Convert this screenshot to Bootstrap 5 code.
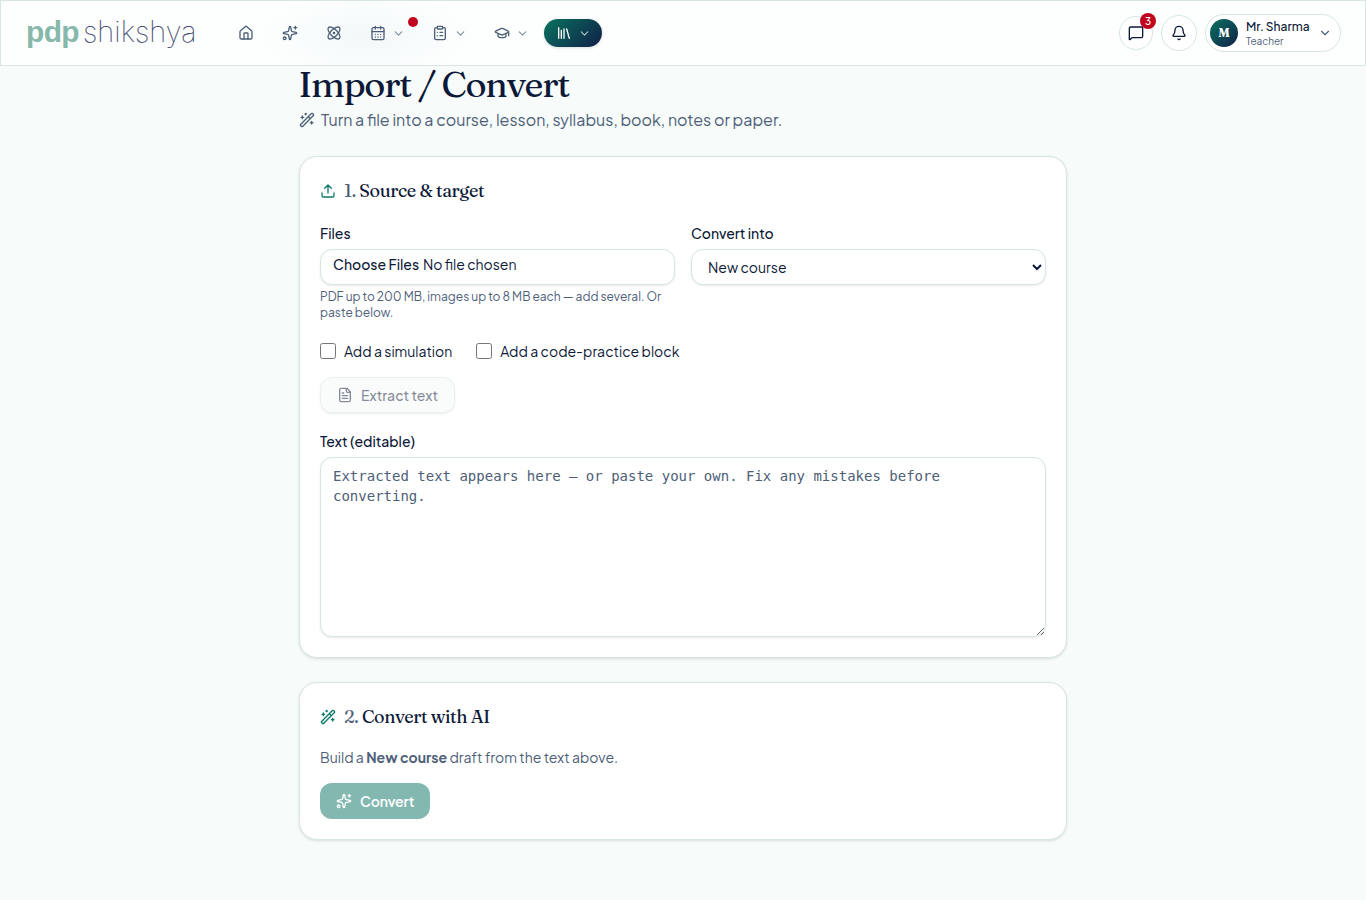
<!DOCTYPE html>
<html lang="en">
<head>
<meta charset="utf-8">
<meta name="viewport" content="width=device-width, initial-scale=1">
<title>Import / Convert</title>
<link rel="stylesheet" href="https://cdn.jsdelivr.net/npm/bootstrap@5.3.0/dist/css/bootstrap.min.css">
<style>
:root{--ink:#0c1838;--slate:#4d6078;--line:#d6e6e3;--teal:#0b7a6b;--red:#c0051f}
body{background:#f7fbfa;color:var(--ink);font-family:"Plus Jakarta Sans",Inter,sans-serif;font-size:14px;line-height:20px;height:900px;overflow:hidden;-webkit-font-smoothing:antialiased}
.ic{width:16px;height:16px;fill:none;stroke:currentColor;stroke-width:2;stroke-linecap:round;stroke-linejoin:round;flex:none;display:block}
.topbar{height:66px;border:1px solid #d9e6e4;padding:0 24px 0 25px;background:radial-gradient(ellipse 110px 45px at 365px 36px,#f3f8f9 0,#f3f8f900 100%),#fdfffe}
.brand-box{width:198px;margin-top:-3px}
.brand-a{font:bold 30px/32px "Liberation Sans",sans-serif;color:#87b8ab;letter-spacing:-.7px}
.brand-b{font:100 29px/32px Inter,sans-serif;color:#1e2858;letter-spacing:.1px;margin-left:4px;-webkit-text-stroke:.2px #4a5278}
.menu-item{color:var(--slate);height:28px;padding:0 13.5px 0 14px;gap:5.5px}
.menu-item.solo{padding:0 14px}
.menu-item .chev{width:13px;height:13px;opacity:.7}
.menu-item.on{background:linear-gradient(135deg,#08735f,#101f47);color:#fff;border-radius:14px;padding:0 12px;width:58px;margin-left:2px;box-shadow:0 1px 3px #0c183826}
.dot{width:10px;height:10px;background:var(--red);top:-2px;right:0}
.round-btn{color:var(--ink);border:1px solid var(--line);background:#fff}
.msg{width:34px;height:34px}
.bell{width:36px;height:36px}
.count{width:16px;height:16px;background:var(--red);font-size:10px;font-weight:500;line-height:16px;top:-4px;right:-4px}
.person{height:38px;width:136px;border:1px solid var(--line);padding:0 8px 0 4px;background:#fff}
.avatar{width:28px;height:28px;background:linear-gradient(135deg,#0b7362,#101f47);font:bold 12px/28px Fraunces,serif}
.p-name{font-size:12px;line-height:14px;font-weight:500;padding-top:1px}
.p-role{font-size:10px;line-height:14px;color:var(--slate)}
.chev-p{width:14px;height:14px;color:var(--slate)}
.page-col{width:768px}
h1,h2{font-family:Fraunces,"Liberation Serif",serif}
h1{font-size:36px;line-height:40px;margin:-2px 0 0 -.5px;font-weight:500;letter-spacing:-1.25px}
.lead-line{font-size:16px;line-height:24px;color:var(--slate);gap:6px;margin-top:4px}
.panel{background:#fff;border:1px solid var(--line);border-radius:18px;padding:20px;box-shadow:0 1px 3px #0c183821}
h2{font-size:18px;line-height:27px;font-weight:500;margin:0;letter-spacing:-.42px}
h2 .ic{color:var(--teal)}
h2 span{color:var(--slate)}
.fields{margin-top:19px}
.lbl{font-weight:500;line-height:20px;margin-bottom:6px;display:block}
.lbl-text{margin-top:18px}
.field{border:1px solid var(--line);border-radius:12px;background:#fff;box-shadow:0 1px 2px #0c183817;width:100%;height:36px;color:var(--ink)}
.file-f{padding:4px 12px}
.pick{margin-right:1.5px}
select.field{padding:0 0 0 12px}
.hint{font-size:12px;line-height:16px;color:var(--slate);margin-top:4px}
.opt input{width:16px;height:16px;margin:0}
.action{height:36px;border-radius:12px;border:1px solid var(--line);color:var(--ink);padding:0 16px;gap:8px;font-weight:500;width:max-content}
.action.ghost{opacity:.5;background:#f7fbfa;box-shadow:0 1px 2px #0c183826}
.action.solid{background:#82b8b0;border:0;color:#fff;font-weight:600;letter-spacing:-.1px}
textarea.field{height:180px;padding:8px 12px;font:14px/20px "DejaVu Sans Mono",monospace;display:block}
textarea::placeholder{color:var(--slate)}
.build{color:var(--slate);margin-top:17px}
</style>
</head>
<body>
<svg class="d-none">
<symbol id="house" viewBox="0 0 24 24"><path d="M15 21v-8a1 1 0 0 0-1-1h-4a1 1 0 0 0-1 1v8"/><path d="M3 10a2 2 0 0 1 .709-1.528l7-6a2 2 0 0 1 2.582 0l7 6A2 2 0 0 1 21 10v9a2 2 0 0 1-2 2H5a2 2 0 0 1-2-2z"/></symbol>
<symbol id="sparkles" viewBox="0 0 24 24"><path d="M11.017 2.814a1 1 0 0 1 1.966 0l1.051 5.558a2 2 0 0 0 1.594 1.594l5.558 1.051a1 1 0 0 1 0 1.966l-5.558 1.051a2 2 0 0 0-1.594 1.594l-1.051 5.558a1 1 0 0 1-1.966 0l-1.051-5.558a2 2 0 0 0-1.594-1.594l-5.558-1.051a1 1 0 0 1 0-1.966l5.558-1.051a2 2 0 0 0 1.594-1.594zM20 2v4M22 4h-4"/><circle cx="4" cy="20" r="2"/></symbol>
<symbol id="atom" viewBox="0 0 24 24"><circle cx="12" cy="12" r="1"/><path d="M20.2 20.2c2.04-2.03.02-7.36-4.5-11.9-4.54-4.52-9.87-6.54-11.9-4.5-2.04 2.03-.02 7.36 4.5 11.9 4.54 4.52 9.87 6.54 11.9 4.5Z"/><path d="M15.7 15.7c4.52-4.54 6.54-9.87 4.5-11.9-2.03-2.04-7.36-.02-11.9 4.5-4.52 4.54-6.54 9.87-4.5 11.9 2.03 2.04 7.36.02 11.9-4.5Z"/></symbol>
<symbol id="calendar" viewBox="0 0 24 24"><path d="M8 2v4M16 2v4M3 10h18M8 14h.01M12 14h.01M16 14h.01M8 18h.01M12 18h.01M16 18h.01"/><rect width="18" height="18" x="3" y="4" rx="2"/></symbol>
<symbol id="clipboard" viewBox="0 0 24 24"><rect width="8" height="4" x="8" y="2" rx="1"/><path d="M16 4h2a2 2 0 0 1 2 2v14a2 2 0 0 1-2 2H6a2 2 0 0 1-2-2V6a2 2 0 0 1 2-2h2M12 11h4M12 16h4M8 11h.01M8 16h.01"/></symbol>
<symbol id="cap" viewBox="0 0 24 24"><path d="M21.42 10.922a1 1 0 0 0-.019-1.838L12.83 5.18a2 2 0 0 0-1.66 0L2.6 9.08a1 1 0 0 0 0 1.832l8.57 3.908a2 2 0 0 0 1.66 0zM22 10v6M6 12.5V16a6 3 0 0 0 12 0v-3.5"/></symbol>
<symbol id="library" viewBox="0 0 24 24"><path d="m16 6 4 14M12 6v14M8 8v12M4 4v16"/></symbol>
<symbol id="chevron" viewBox="0 0 24 24"><path d="m6 9 6 6 6-6"/></symbol>
<symbol id="message" viewBox="0 0 24 24"><path d="M22 17a2 2 0 0 1-2 2H6.828a2 2 0 0 0-1.414.586l-2.202 2.202A.71.71 0 0 1 2 21.286V5a2 2 0 0 1 2-2h16a2 2 0 0 1 2 2z"/></symbol>
<symbol id="bell" viewBox="0 0 24 24"><path d="M10.268 21a2 2 0 0 0 3.464 0M3.262 15.326A1 1 0 0 0 4 17h16a1 1 0 0 0 .74-1.673C19.41 13.956 18 12.499 18 8A6 6 0 0 0 6 8c0 4.499-1.411 5.956-2.738 7.326"/></symbol>
<symbol id="wand" viewBox="0 0 24 24"><path d="m21.64 3.64-1.28-1.28a1.21 1.21 0 0 0-1.72 0L2.36 18.64a1.21 1.21 0 0 0 0 1.72l1.28 1.28a1.2 1.2 0 0 0 1.72 0L21.64 5.36a1.2 1.2 0 0 0 0-1.72M14 7l3 3M5 6v4M19 14v4M10 2v2M7 8H3M21 16h-4M11 3H9"/></symbol>
<symbol id="upload" viewBox="0 0 24 24"><path d="M12 3v12M17 8l-5-5-5 5M21 15v4a2 2 0 0 1-2 2H5a2 2 0 0 1-2-2v-4"/></symbol>
<symbol id="file" viewBox="0 0 24 24"><path d="M15 2H6a2 2 0 0 0-2 2v16a2 2 0 0 0 2 2h12a2 2 0 0 0 2-2V7ZM14 2v4a2 2 0 0 0 2 2h4M10 9H8M16 13H8M16 17H8"/></symbol>
</svg>
<header class="topbar d-flex align-items-center">
  <a class="d-flex align-items-center text-decoration-none brand-box" href="#"><span class="brand-a">pdp</span><span class="brand-b">shikshya</span></a>
  <nav class="d-flex align-items-center">
    <a class="menu-item solo d-flex align-items-center" href="#"><svg class="ic"><use href="#house"/></svg></a>
    <a class="menu-item solo d-flex align-items-center" href="#"><svg class="ic"><use href="#sparkles"/></svg></a>
    <a class="menu-item solo d-flex align-items-center" href="#"><svg class="ic"><use href="#atom"/></svg></a>
    <a class="menu-item d-flex align-items-center position-relative" href="#"><svg class="ic"><use href="#calendar"/></svg><svg class="ic chev"><use href="#chevron"/></svg><i class="dot rounded-circle position-absolute"></i></a>
    <a class="menu-item d-flex align-items-center" href="#"><svg class="ic"><use href="#clipboard"/></svg><svg class="ic chev"><use href="#chevron"/></svg></a>
    <a class="menu-item d-flex align-items-center" href="#"><svg class="ic"><use href="#cap"/></svg><svg class="ic chev"><use href="#chevron"/></svg></a>
    <a class="menu-item on d-flex align-items-center" href="#"><svg class="ic"><use href="#library"/></svg><svg class="ic chev"><use href="#chevron"/></svg></a>
  </nav>
  <div class="d-flex align-items-center gap-2 ms-auto">
    <button class="round-btn msg rounded-circle d-flex align-items-center justify-content-center p-0 position-relative"><svg class="ic"><use href="#message"/></svg><span class="count rounded-circle position-absolute text-white text-center">3</span></button>
    <button class="round-btn bell rounded-circle d-flex align-items-center justify-content-center p-0"><svg class="ic"><use href="#bell"/></svg></button>
    <div class="person rounded-pill d-flex align-items-center"><span class="avatar rounded-circle text-white text-center">M</span><span class="ms-2"><span class="d-block p-name">Mr. Sharma</span><span class="d-block p-role">Teacher</span></span><svg class="ic ms-auto chev-p"><use href="#chevron"/></svg></div>
  </div>
</header>
<main class="page-col mx-auto">
  <h1>Import / Convert</h1>
  <p class="lead-line d-flex align-items-center mb-0"><svg class="ic"><use href="#wand"/></svg>Turn a file into a course, lesson, syllabus, book, notes or paper.</p>
  <section class="panel mt-4">
    <h2 class="d-flex align-items-center gap-2"><svg class="ic"><use href="#upload"/></svg><div><span>1.</span> Source &amp; target</div></h2>
    <div class="row gx-3 fields">
      <div class="col-6"><label class="lbl">Files</label><div class="field file-f"><span class="fw-medium pick">Choose Files</span> <span>No file chosen</span></div><p class="hint mb-0">PDF up to 200 MB, images up to 8 MB each — add several. Or paste below.</p></div>
      <div class="col-6"><label class="lbl">Convert into</label><select class="field"><option>New course</option></select></div>
    </div>
    <div class="d-flex gap-4 mt-3 pt-1">
      <label class="opt d-flex align-items-center gap-2"><input type="checkbox">Add a simulation</label>
      <label class="opt d-flex align-items-center gap-2"><input type="checkbox">Add a code-practice block</label>
    </div>
    <button class="action ghost d-flex align-items-center mt-3"><svg class="ic"><use href="#file"/></svg>Extract text</button>
    <label class="lbl lbl-text">Text (editable)</label>
    <textarea class="field" placeholder="Extracted text appears here — or paste your own. Fix any mistakes before converting."></textarea>
  </section>
  <section class="panel mt-4">
    <h2 class="d-flex align-items-center gap-2"><svg class="ic"><use href="#wand"/></svg><div><span>2.</span> Convert with AI</div></h2>
    <p class="build mb-0">Build a <b>New course</b> draft from the text above.</p>
    <button class="action solid d-flex align-items-center mt-3"><svg class="ic"><use href="#sparkles"/></svg>Convert</button>
  </section>
</main>
<script src="https://cdn.jsdelivr.net/npm/bootstrap@5.3.0/dist/js/bootstrap.bundle.min.js"></script>
</body>
</html>
